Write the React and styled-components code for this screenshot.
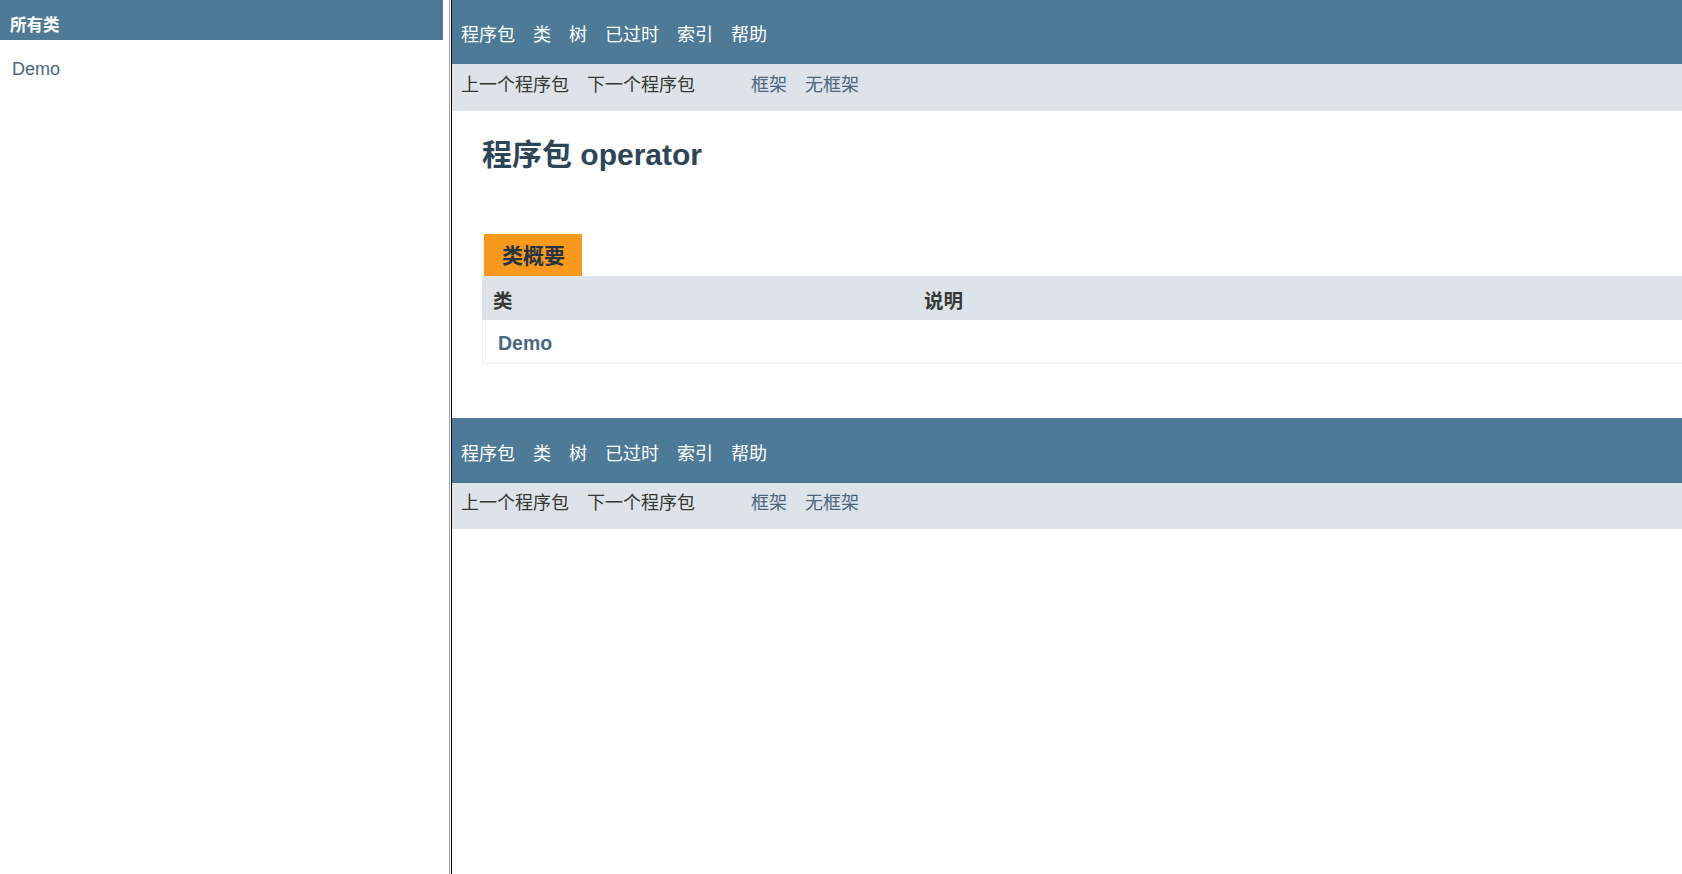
import React from 'react';
import styled, { createGlobalStyle } from 'styled-components';

const GlobalStyle = createGlobalStyle`
  html, body {
    margin: 0;
    padding: 0;
    height: 100%;
    overflow: hidden;
    background: #ffffff;
  }
  body {
    font-family: "Liberation Sans", "Noto Sans CJK SC", sans-serif;
    color: #353833;
  }
`;

const Frameset = styled.div`
  display: flex;
  height: 100vh;
  width: 100vw;
`;

const LeftFrame = styled.div`
  width: 443px;
  flex: none;
`;

// frame border between the two panes
const Divider = styled.div`
  flex: none;
  width: 1px;
  margin-left: 6px;
  border-left: 1px solid #a0a0a0;
  border-right: 1px solid #000000;
  background: #ffffff;
`;

const RightFrame = styled.div`
  flex: 1;
  min-width: 0;
  overflow: hidden;
`;

const Bar = styled.div`
  height: 40px;
  background: #4d7a97;
  color: #ffffff;
  font-weight: bold;
  font-size: 16.5px;
  display: flex;
  align-items: center;
  padding: 7px 0 0 10px;
  box-sizing: border-box;
`;

const ClassList = styled.ul`
  list-style: none;
  margin: 0;
  padding: 19px 0 0 12px;
`;

const ClassItem = styled.li`
  font-size: 18px;
  line-height: 20px;
  color: #4a6782;
`;

const TopNav = styled.div`
  height: ${p => p.$h}px;
  background: #4d7a97;
  display: flex;
  align-items: center;
  padding: 6px 0 0 9px;
  box-sizing: border-box;
  gap: 18px;
`;

const NavItem = styled.span`
  color: #ffffff;
  font-size: 18px;
  line-height: 22px;
`;

const SubNav = styled.div`
  height: ${p => p.$h}px;
  background: #dee3e9;
  display: flex;
  align-items: center;
  padding: 0 0 6px 9px;
  box-sizing: border-box;
`;

const SubGroup = styled.div`
  display: flex;
  gap: 18px;
  margin-left: ${p => p.$offset || 0}px;
`;

const SubItem = styled.span`
  font-size: 18px;
  line-height: 22px;
  color: ${p => (p.$link ? '#4a6782' : '#353833')};
`;

const Header = styled.div`
  padding: 26px 0 0 30px;
`;

const Title = styled.h1`
  margin: 0;
  font-size: 30px;
  line-height: 36px;
  font-weight: bold;
  color: #2c4557;
`;

const Summary = styled.div`
  margin: 61px 0 0 30px;
`;

const Caption = styled.div`
  display: inline-block;
  margin-left: 2px;
  height: 42px;
  padding: 2px 17px 0 18px;
  box-sizing: border-box;
  background: #f8981d;
  color: #253441;
  font-weight: bold;
  font-size: 21px;
  line-height: 40px;
  vertical-align: top;
`;

const Row = styled.div`
  display: grid;
  grid-template-columns: ${p => (p.$head ? '431px' : '430px')} 1fr;
  height: 44px;
  box-sizing: border-box;
  align-items: center;
  background: ${p => (p.$head ? '#dee3e9' : '#ffffff')};
  border-left: ${p => (p.$head ? 'none' : '1px solid #eeeeef')};
  border-bottom: ${p => (p.$head ? 'none' : '1px solid #eeeeef')};
`;

const HeadCell = styled.div`
  padding: 6px 0 0 11px;
  font-size: 19.5px;
  line-height: 22px;
  font-weight: bold;
  color: #353833;
`;

const ClassCell = styled.div`
  padding: 3px 0 0 15px;
  font-size: 19.5px;
  line-height: 22px;
  font-weight: bold;
  color: #4a6782;
`;

const BottomNav = styled.div`
  margin-top: 54px;
`;

const navItems = ['程序包', '类', '树', '已过时', '索引', '帮助'];

const Navigation = ({ top }) => (
  <div>
    <TopNav $h={top ? 64 : 65}>
      {navItems.map(n => (
        <NavItem key={n}>{n}</NavItem>
      ))}
    </TopNav>
    <SubNav $h={top ? 47 : 46}>
      <SubGroup>
        <SubItem>上一个程序包</SubItem>
        <SubItem>下一个程序包</SubItem>
      </SubGroup>
      <SubGroup $offset={56}>
        <SubItem $link>框架</SubItem>
        <SubItem $link>无框架</SubItem>
      </SubGroup>
    </SubNav>
  </div>
);

const App = () => {
  return (
    <Frameset>
      <GlobalStyle />
      <LeftFrame>
        <Bar>所有类</Bar>
        <ClassList>
          <ClassItem>Demo</ClassItem>
        </ClassList>
      </LeftFrame>
      <Divider />
      <RightFrame>
        <Navigation top />
        <Header>
          <Title>程序包&nbsp;operator</Title>
        </Header>
        <Summary>
          <Caption>类概要</Caption>
          <Row $head>
            <HeadCell>类</HeadCell>
            <HeadCell>说明</HeadCell>
          </Row>
          <Row>
            <ClassCell>Demo</ClassCell>
            <div />
          </Row>
        </Summary>
        <BottomNav>
          <Navigation />
        </BottomNav>
      </RightFrame>
    </Frameset>
  );
};

export default App;
